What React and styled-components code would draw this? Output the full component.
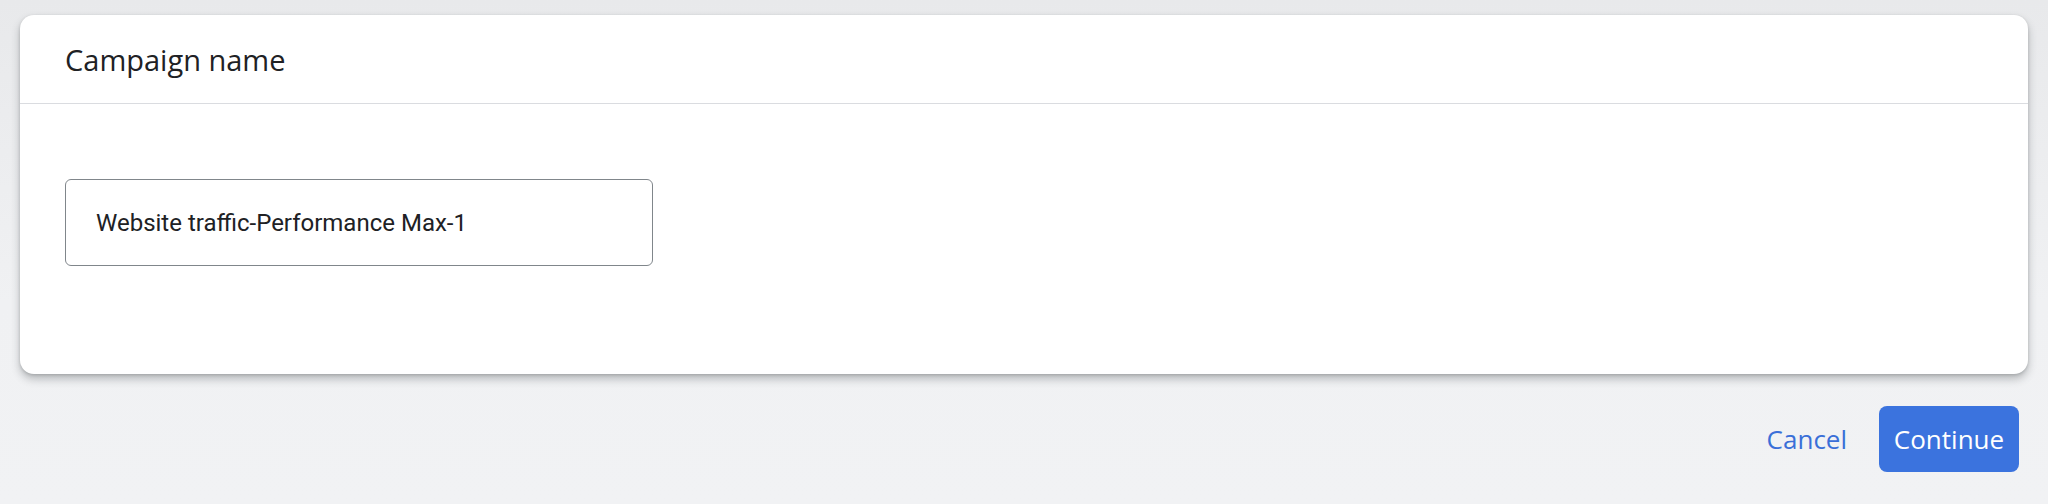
import React from "react";
import styled, { createGlobalStyle } from "styled-components";

const GlobalStyle = createGlobalStyle`
  html, body {
    margin: 0;
    padding: 0;
  }
  body {
    width: 2048px;
    height: 504px;
    overflow: hidden;
    background: linear-gradient(180deg, #e8e9eb 0%, #f0f1f3 60%, #f1f2f4 100%);
    font-family: Roboto, "Liberation Sans", sans-serif;
  }
`;

const App = () => {
  return (
    <>
      <GlobalStyle />
      <Page>
        <Card>
          <CardHeader>
            <Title>Campaign name</Title>
          </CardHeader>
          <CardBody>
            <NameField>Website traffic-Performance Max-1</NameField>
          </CardBody>
        </Card>
        <Footer>
          <TextButton>Cancel</TextButton>
          <PrimaryButton>Continue</PrimaryButton>
        </Footer>
      </Page>
    </>
  );
};

const Page = styled.main`
  width: 100%;
  height: 504px;
  padding: 15px 20px 0 20px;
  box-sizing: border-box;
  display: flex;
  flex-direction: column;
`;

const Card = styled.section`
  width: 100%;
  height: 359px;
  background: #ffffff;
  border-radius: 14px;
  box-shadow: 0 5px 9px rgba(60, 64, 67, 0.32), 0 1px 3px rgba(60, 64, 67, 0.2);
  display: flex;
  flex-direction: column;
  overflow: hidden;
`;

const CardHeader = styled.header`
  height: 89px;
  box-sizing: border-box;
  padding: 0 45px;
  display: flex;
  align-items: center;
  border-bottom: 1px solid #dadce0;
`;

const Title = styled.h2`
  margin: 0;
  font-family: "Open Sans", Lato, sans-serif;
  font-weight: 500;
  font-size: 29px;
  color: #202124;
  letter-spacing: 0;
`;

const CardBody = styled.div`
  padding: 75px 45px 0 45px;
`;

const NameField = styled.div`
  width: 588px;
  height: 87px;
  box-sizing: border-box;
  border: 1.5px solid #80868b;
  border-radius: 6px;
  padding: 0 30px;
  display: flex;
  align-items: center;
  font-family: Roboto, sans-serif;
  font-size: 24px;
  color: #202124;
`;

const Footer = styled.footer`
  flex: 1;
  display: flex;
  align-items: center;
  justify-content: flex-end;
  gap: 18px;
  padding: 0 9px 0 0;
`;

const TextButton = styled.button`
  border: none;
  background: transparent;
  padding: 0 14px;
  height: 66px;
  font-family: "Open Sans", sans-serif;
  font-weight: 500;
  font-size: 26px;
  color: #3a6fd8;
  cursor: pointer;
`;

const PrimaryButton = styled.button`
  border: none;
  width: 140px;
  height: 66px;
  border-radius: 8px;
  background: #3b73de;
  color: #ffffff;
  font-family: "Open Sans", sans-serif;
  font-weight: 500;
  font-size: 26px;
  cursor: pointer;
`;

export default App;
